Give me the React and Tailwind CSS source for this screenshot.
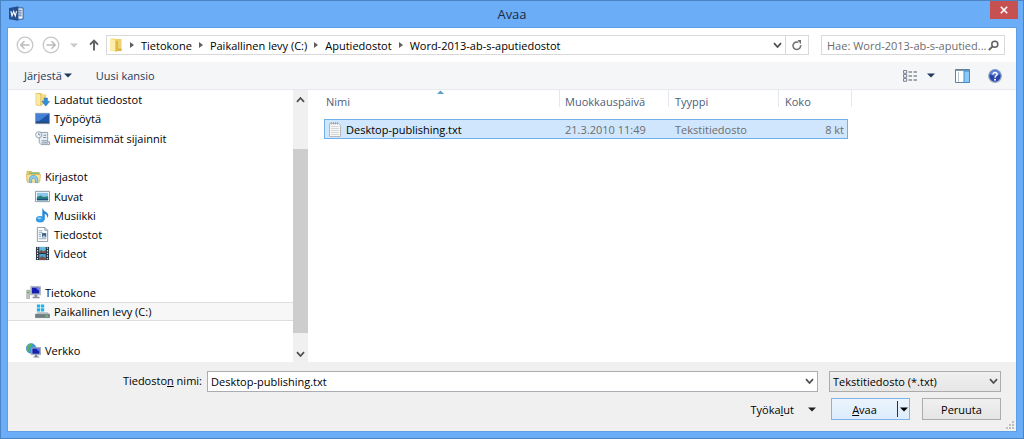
import React from "react";

const Svg = ({ children, className = "size-[15px]", box = "0 0 16 16" }) => (
  <svg viewBox={box} className={`${className} shrink-0`} fill="none" aria-hidden="true">
    {children}
  </svg>
);

const Chevron = ({ className = "" }) => (
  <Svg box="0 0 9 7" className={`h-[7px] w-[9px] ${className}`}>
    <path d="M1 1.2 4.5 5 8 1.2" stroke="#505050" strokeWidth="1.8" />
  </Svg>
);

const Caret = ({ color = "#1e395b" }) => (
  <Svg box="0 0 8 5" className="h-[5px] w-2">
    <path d="M0 .5h8L4 4.5z" fill={color} />
  </Svg>
);

const WordIcon = () => (
  <Svg>
    <path d="M9 2h6v12H9z" fill="#fff" stroke="#2b579a" />
    <path d="M10 4.5h3.5M10 6.5h3.5M10 8.5h3.5M10 10.5h3.5" stroke="#2b579a" />
    <path d="M0 2 10 .3v15.4L0 14z" fill="#244f91" />
    <path d="m2 5.5 1.2 5L5 5.8l1.7 4.7L8 5.5" stroke="#fff" strokeWidth="1.2" />
  </Svg>
);

const FolderIcon = () => (
  <Svg className="h-4 w-[14px]" box="0 0 14 16">
    <path d="M1.500 1.500h4l2 1.500V14h-6z" fill="#f3d774" />
    <path d="M6 2h6.500v12H6z" fill="#efd170" />
    <path d="m1.500 1.500 5 2V15l-5-1.500z" fill="#fbeea8" />
    <path d="M6.500 3.500V15l2.500-1.500V4z" fill="#e0b740" />
    <path d="M9 11.500h3.500V14H9z" fill="#dcb345" />
  </Svg>
);

const DownloadsIcon = () => (
  <Svg>
    <path d="M1 1h5l2 1.5V14H1z" fill="#e5bd4a" />
    <path d="M6 2.5h6V13H6z" fill="#f2d980" />
    <path d="m1 1 5 1.5V15l-5-1.5z" fill="#faeaa5" stroke="#d9b65a" strokeWidth=".5" />
    <path d="M9.8 6.5h3.4V10h2.3l-4 5-4-5h2.3z" fill="#2f8fe0" stroke="#1f68b0" strokeWidth=".6" />
  </Svg>
);

const DesktopIcon = () => (
  <Svg>
    <path d="M.5 2.5h15v11H.5z" fill="#1d56a8" stroke="#8f9fb3" />
    <path d="M1 3h14L4 11H1z" fill="#4380d6" />
    <path d="M1 11.5h14V13H1z" fill="#294876" />
  </Svg>
);

const RecentIcon = () => (
  <Svg>
    <path d="M4.5 1.5h9v10h2v3H6.5l-2-2z" fill="#e9eff4" stroke="#8e9dab" />
    <path d="M7 10.5h6M9 4.5h3M8.5 7h3.5M7 12.7h7" stroke="#72879a" />
    <circle cx="4" cy="4" r="3.3" fill="#f4f7fa" stroke="#8e9dab" />
    <path d="M4 2v2.2h1.8" stroke="#4c6d91" strokeWidth=".8" />
  </Svg>
);

const LibrariesIcon = () => (
  <Svg>
    <path d="M1 2.5h5L7 4h7.5v9H1z" fill="#efd06c" stroke="#c9a548" strokeWidth=".7" />
    <path d="M3 4.500h11" stroke="#72b878" strokeWidth="1.4" />
    <path d="M.5 6h15l-1 8H1.5z" fill="#f8e59b" stroke="#d5b55c" strokeWidth=".7" />
    <path d="M3.500 14.500v-3.200a4.500 4.500 0 0 1 9 0v3.200H10v-2.700a2 2 0 0 0-4 0v2.700z" fill="#8fcdec" stroke="#4a94c0" strokeWidth=".7" />
  </Svg>
);

const PicturesIcon = () => (
  <Svg>
    <path d="M.5 2.500h15v11H.5z" fill="#fff" stroke="#8795a3" />
    <path d="M2 4h12v8H2z" fill="#8bc7ea" />
    <path d="M2 8.500 6 7l3 1.500 5-.8V12H2z" fill="#2e7e7c" />
    <path d="M2 10.500h12V12H2z" fill="#194f86" />
  </Svg>
);

const MusicIcon = () => (
  <Svg>
    <path d="M8.500.5c.5 3.500 5.500 3.500 5.700 7.200 0 1.200-.5 2.200-1.200 3 .3-3-1.500-4.200-2.600-4.700v6.500H7.800V.5z" fill="#2a87d4" />
    <ellipse cx="5.500" cy="12" rx="4.500" ry="3.400" fill="#3299e3" />
    <ellipse cx="4.700" cy="11" rx="2.200" ry="1.200" fill="#91d0f7" />
  </Svg>
);

const DocumentsIcon = () => (
  <Svg>
    <path d="M2.500.5h8l3 3v12h-11z" fill="#fbfcfd" stroke="#8d99a5" />
    <path d="M10.500.5v3h3" stroke="#8d99a5" />
    <path d="M4 4h4M4 6h4M4 8h2.500M4 10h2.500M4 12.500h8" stroke="#8ca5bf" />
    <path d="M7.500 6.500h4.500v4.500H7.500z" fill="#385f8e" />
    <path d="m7.500 11 2-2.500L12 11z" fill="#a6c6de" />
  </Svg>
);

const VideosIcon = () => (
  <Svg>
    <path d="M1 1h14v14H1z" fill="#263443" />
    <path d="M4.500 1h7v6.500h-7z" fill="#61b9dc" />
    <path d="M4.500 8.500h7V15h-7z" fill="#4a9fd0" />
    <path d="M4.500 6 7 4l1.500 2 3-2v3.500h-7zM4.500 13l3-2 4 2v2h-7z" fill="#784c45" />
    <path d="M2.700 1.500v13M13.300 1.500v13" stroke="#dbe8ef" strokeWidth="1.300" strokeDasharray="1.500 1.300" />
  </Svg>
);

const ComputerIcon = () => (
  <Svg>
    <path d="M.8 5.500h3v9h-3z" fill="#c0cbc0" stroke="#84907f" strokeWidth=".6" />
    <path d="M1.500 8h1.600" stroke="#43a047" strokeWidth="1.400" />
    <path d="M5 1.500h10.500v9H5z" fill="#c9ced6" stroke="#8b919d" strokeWidth=".6" />
    <path d="M6.200 2.700h8.100v6.400H6.200z" fill="#161bb0" />
    <path d="M10 2.700h4.300v4z" fill="#6d84ee" />
    <path d="M9 10.500h3v2h2.500V14H7v-1.500h2z" fill="#8b919d" />
  </Svg>
);

const DriveIcon = () => (
  <Svg>
    <path d="M2 .5h3.400v3.300H2zM6.200.5h3.600v3.300H6.200zM2 4.600h3.400v3.300H2zM6.200 4.600h3.600v3.300H6.200z" fill="#1bb4e9" />
    <path d="m2 9.500 1-1h10.500L15.500 11H.5z" fill="#c2c9cd" />
    <path d="M.5 11h15v3.500H.5z" fill="#6d7d83" stroke="#56656b" strokeWidth=".6" />
    <path d="M11 12.700h3" stroke="#70e070" strokeWidth="1.200" />
  </Svg>
);

const NetworkIcon = () => (
  <Svg>
    <circle cx="5.500" cy="5.800" r="5.200" fill="#3b9bd8" stroke="#2a75aa" strokeWidth=".5" />
    <path d="M2 2.500c2-2 4-1.800 5-.8L5 4 3 5.500 4 8 2.500 9C.5 7 .5 4.500 2 2.500z" fill="#59b35a" />
    <path d="M5.700 4.800h9.800v7.700H5.700z" fill="#cdd6e4" stroke="#6e7b91" strokeWidth=".6" />
    <path d="M6.700 5.800h7.800v5.700H6.700z" fill="#1322ae" />
    <path d="M10.500 5.800h4v3.700z" fill="#607df0" />
    <path d="M9.500 12.500H12v2h2v1H8v-1h1.500z" fill="#788499" />
  </Svg>
);

const TextFileIcon = () => (
  <Svg className="h-[15px] w-[14px]" box="0 0 14 15">
    <path d="M1.500 1.500h9l2 2v11h-11z" fill="#f7f7f7" stroke="#b5b8bb" />
    <path d="M3 4.500h7.500M3 6.500h8M3 8.500h8M3 10.500h8M3 12.500h8" stroke="#d3d7da" />
    <path d="M3.500 0v2.500M5.500 0v2.500M7.500 0v2.500M9.500 0v2.500" stroke="#9ba1a6" strokeWidth=".8" />
  </Svg>
);

const tree = [
  { label: "Ladatut tiedostot", Icon: DownloadsIcon, child: true },
  { label: "Työpöytä", Icon: DesktopIcon, child: true },
  { label: "Viimeisimmät sijainnit", Icon: RecentIcon, child: true },
  null,
  { label: "Kirjastot", Icon: LibrariesIcon },
  { label: "Kuvat", Icon: PicturesIcon, child: true },
  { label: "Musiikki", Icon: MusicIcon, child: true },
  { label: "Tiedostot", Icon: DocumentsIcon, child: true },
  { label: "Videot", Icon: VideosIcon, child: true },
  null,
  { label: "Tietokone", Icon: ComputerIcon },
  { label: "Paikallinen levy (C:)", Icon: DriveIcon, child: true, selected: true },
  null,
  { label: "Verkko", Icon: NetworkIcon },
];

const crumbs = ["Tietokone", "Paikallinen levy (C:)", "Aputiedostot", "Word-2013-ab-s-aputiedostot"];

function TitleBar() {
  return (
    <header className="grid h-[26px] grid-cols-[1fr_auto_1fr] items-start">
      <div className="pt-[5px] pl-2">
        <WordIcon />
      </div>
      <h1 className="pt-1 text-[13px] leading-[18px] text-[#1b2b45]">Avaa</h1>
      <button aria-label="Sulje" className="mr-[5px] flex h-[18px] w-7 items-center justify-center justify-self-end bg-[#c75050]">
        <Svg box="0 0 8 8" className="size-2">
          <path d="m.8.8 6.400 6.400M7.200.8.8 7.200" stroke="#fff" strokeWidth="1.600" />
        </Svg>
      </button>
    </header>
  );
}

function NavButton({ label, forward }) {
  return (
    <button aria-label={label} className="shrink-0">
      <Svg box="0 0 18 18" className="size-[18px]">
        <circle cx="9" cy="9" r="7.800" stroke="#c8c8c8" strokeWidth="1.300" />
        {forward ? (
          <path d="M4.500 9h8.500M9.500 5.300 13.200 9l-3.700 3.700" stroke="#bcbcbc" strokeWidth="1.600" />
        ) : (
          <path d="M13.500 9H5M8.500 5.300 4.800 9l3.700 3.700" stroke="#bcbcbc" strokeWidth="1.600" />
        )}
      </Svg>
    </button>
  );
}

function AddressRow() {
  return (
    <div className="flex h-[34px] items-center bg-white pr-[11px] pl-2">
      <div className="flex gap-2">
        <NavButton label="Edellinen" />
        <NavButton label="Seuraava" forward />
      </div>
      <button aria-label="Viimeisimmät sijainnit" className="ml-[10px]">
        <Caret color="#c9c9c9" />
      </button>
      <button aria-label="Ylös" className="mr-[7px] ml-[11px]">
        <Svg box="0 0 10 12" className="h-3 w-[10px]">
          <path d="M5 11.500V2M1 5.700 5 1.700l4 4" stroke="#606060" strokeWidth="1.900" />
        </Svg>
      </button>
      <div className="flex h-5 min-w-0 flex-1 border border-[#d9d9d9]">
        <nav aria-label="Polku" className="flex min-w-0 flex-1 items-center pl-[2px]">
          <FolderIcon />
          {crumbs.map((c) => (
            <React.Fragment key={c}>
              <Svg box="0 0 4 6" className="mx-[7px] h-[6px] w-1">
                <path d="M0 0v6l4-3z" fill="#606060" />
              </Svg>
              <a href="#" className="whitespace-nowrap">{c}</a>
            </React.Fragment>
          ))}
        </nav>
        <button aria-label="Näytä polut" className="px-[3px]">
          <Chevron />
        </button>
        <button aria-label="Päivitä" className="flex w-[23px] items-center justify-center border-l border-[#d9d9d9]">
          <Svg box="0 0 10 11" className="h-[11px] w-[10px]">
            <path d="M8.600 5.200A3.800 3.800 0 1 1 6.500 2.300" stroke="#707070" strokeWidth="1.500" />
            <path d="M5.500 0H9v4.200z" fill="#707070" />
          </Svg>
        </button>
      </div>
      <label className="ml-3 flex h-5 w-[184px] items-center border border-[#d9d9d9] pr-[5px] pl-[5px]">
        <input
          type="text"
          aria-label="Hae"
          placeholder="Hae: Word-2013-ab-s-aputied..."
          className="min-w-0 flex-1 outline-none placeholder:text-[#6d6d6d]"
        />
        <Svg box="0 0 11 11" className="size-[11px]">
          <circle cx="6.800" cy="4.200" r="3" stroke="#606060" strokeWidth="1.500" />
          <path d="M4.600 6.400.8 10.200" stroke="#606060" strokeWidth="1.900" />
        </Svg>
      </label>
    </div>
  );
}

function Toolbar() {
  return (
    <div className="flex h-7 items-center border-b border-[#e6e9ed] bg-[#f5f6f7] pr-[14px] pl-4 text-[#1e395b]">
      <button className="flex items-center gap-[2px]">
        Järjestä
        <Caret />
      </button>
      <button className="ml-6">Uusi kansio</button>
      <button aria-label="Muuta näkymää" className="ml-auto">
        <Svg box="0 0 15 12" className="h-3 w-[15px]">
          {[0, 4, 8].map((y) => (
            <g key={y} transform={`translate(0 ${y})`}>
              <path d="M.5.500h3.200v2.800H.5z" fill="#eef1f6" stroke="#6d7788" strokeWidth=".9" />
              <path d="M5.500 2H9M10.500 2H14" stroke="#4f5967" strokeWidth="1.200" />
            </g>
          ))}
        </Svg>
      </button>
      <button aria-label="Lisää näkymiä" className="ml-[9px]">
        <Caret />
      </button>
      <button aria-label="Näytä esikatseluruutu" className="ml-5">
        <Svg box="0 0 15 14" className="h-[14px] w-[15px]">
          <path d="M.5.500h14v13H.5z" fill="#fff" stroke="#66809a" />
          <path d="M1 1.500h13" stroke="#7d99b6" />
          <path d="M9 2h5.500v11.500H9z" fill="#8cc8f5" stroke="#3c8fd0" />
          <path d="M3.500 3v10" stroke="#b9c3cd" />
        </Svg>
      </button>
      <button aria-label="Ohje" className="ml-[18px]">
        <Svg box="0 0 14 14" className="size-[14px]">
          <circle cx="7" cy="7" r="6.300" fill="#2645ad" stroke="#a2acc4" strokeWidth="1.200" />
          <path d="M2 5.500a5 5 0 0 1 10 0C9 7 5 7 2 5.500z" fill="#5e7fd6" />
          <path d="M4.900 5.600c0-3 4.400-2.700 4.200-.2C9 6.900 7 6.700 7 8.700" stroke="#fff" strokeWidth="1.500" />
          <circle cx="7" cy="10.700" r="1" fill="#fff" />
        </Svg>
      </button>
    </div>
  );
}

function Sidebar() {
  return (
    <nav aria-label="Sijainnit" className="flex w-[300px] shrink-0">
      <ul className="flex flex-1 flex-col pb-[2px]">
        {tree.map((item, i) => (
          <li key={i} className="flex min-h-[19px] flex-1">
            {item && (
              <a
                href="#"
                className={`flex flex-1 items-center gap-1 border-y ${item.child ? "pl-[27px]" : "pl-[18px]"} ${
                  item.selected ? "border-[#dedede] bg-[#f7f7f7]" : "border-transparent"
                }`}
              >
                <item.Icon />
                {item.label}
              </a>
            )}
          </li>
        ))}
      </ul>
      <div className="flex w-[15px] flex-col items-center bg-[#f0f0f0]">
        <Chevron className="mt-[6px] rotate-180" />
        <div className="mt-[46px] w-full flex-1 bg-[#cdcdcd]" />
        <Chevron className="mt-[18px] mb-1" />
      </div>
    </nav>
  );
}

function FileList() {
  const head = "h-[17px] border-r border-[#e3e8ee] pt-1 leading-4";
  const cell = "h-5 border-y border-[#70b0e8] p-0";
  return (
    <main className="min-w-0 flex-1 overflow-hidden pl-4">
      <table className="w-[528px] table-fixed border-separate border-spacing-0 text-left">
        <colgroup>
          <col className="w-[236px]" />
          <col className="w-[109px]" />
          <col className="w-[110px]" />
          <col className="w-[69px]" />
          <col className="w-1" />
        </colgroup>
        <thead className="text-[#4c607a]">
          <tr>
            <th className="relative h-[29px] p-0 align-top font-normal">
              <div className={`${head} pl-[2px]`}>Nimi</div>
              <Svg box="0 0 7 4" className="absolute top-0 left-[113px] h-1 w-[7px]">
                <path d="M0 4 3.500.500 7 4z" fill="#5aa0c8" />
              </Svg>
            </th>
            <th className="p-0 align-top font-normal"><div className={`${head} pl-[5px]`}>Muokkauspäivä</div></th>
            <th className="p-0 align-top font-normal"><div className={`${head} pl-[6px]`}>Tyyppi</div></th>
            <th colSpan={2} className="p-0 align-top font-normal"><div className={`${head} pl-[6px]`}>Koko</div></th>
          </tr>
        </thead>
        <tbody>
          <tr aria-selected="true" className="text-[#6d6d6d]">
            <td className={`${cell} border-l bg-[#cfe6fc]`}>
              <div className="flex items-center gap-1 pl-[3px] text-black">
                <TextFileIcon />
                Desktop-publishing.txt
              </div>
            </td>
            <td className={`${cell} bg-[#cfe6fc] pl-[5px]`}>21.3.2010 11:49</td>
            <td className={`${cell} bg-[#cfe6fc] pl-[6px]`}>Tekstitiedosto</td>
            <td className={`${cell} border-r bg-[#cfe6fc] pr-[3px] text-right`}>8 kt</td>
            <td />
          </tr>
        </tbody>
      </table>
    </main>
  );
}

function Footer() {
  return (
    <footer className="relative grid grid-cols-[195px_1fr_auto] gap-y-[6px] bg-[#f0f0f0] pt-[9px] pr-[15px] pb-[11px]">
      <label htmlFor="filename" className="pr-px text-right leading-5">
        Tiedosto<u>n</u> nimi:
      </label>
      <div className="ml-1 flex h-[21px] min-w-0 items-center border border-[#abadb3] bg-white pr-[3px] pl-[3px]">
        <input id="filename" defaultValue="Desktop-publishing.txt" className="min-w-0 flex-1 outline-none" />
        <button aria-label="Näytä tiedostonimet"><Chevron /></button>
      </div>
      <div className="ml-[11px] grid w-[172px] items-center">
        <select
          aria-label="Tiedostotyyppi"
          className="col-start-1 row-start-1 h-[21px] w-full appearance-none border border-[#acacac] bg-linear-to-b from-[#f0f0f0] to-[#e6e6e6] pl-[3px]"
        >
          <option>Tekstitiedosto (*.txt)</option>
        </select>
        <Chevron className="pointer-events-none col-start-1 row-start-1 mr-[3px] justify-self-end" />
      </div>
      <div className="col-span-3 flex h-[22px] justify-end">
        <button className="mr-[15px] flex items-center gap-[14px]">
          <span>Työka<u>l</u>ut</span>
          <Caret color="#202020" />
        </button>
        <div className="flex w-[79px] border border-[#7eb4ea] bg-linear-to-b from-[#ecf4fc] to-[#dcecfc]">
          <button className="flex-1"><u>A</u>vaa</button>
          <button aria-label="Avausvaihtoehdot" className="my-[2px] flex w-3 items-center justify-center border-l border-[#303030]">
            <Caret color="#000" />
          </button>
        </div>
        <button className="ml-3 w-[79px] border border-[#acacac] bg-linear-to-b from-[#f0f0f0] to-[#e5e5e5]">Peruuta</button>
      </div>
      <Svg box="0 0 8 8" className="absolute right-[2px] bottom-[2px] size-2">
        <path d="M6 0h2v2H6zM3 3h2v2H3zM6 3h2v2H6zM0 6h2v2H0zM3 6h2v2H3zM6 6h2v2H6z" fill="#bfbfbf" />
      </Svg>
    </footer>
  );
}

export default function App() {
  return (
    <div className="flex min-h-screen flex-col border border-[#4a84c4] bg-[#6badf6] font-['Open_Sans','Noto_Sans',sans-serif] text-[11px] leading-[17px] text-black">
      <TitleBar />
      <div className="mx-[6px] mb-[6px] flex flex-1 flex-col border border-[#5f9fe6] bg-white">
        <AddressRow />
        <Toolbar />
        <div className="flex flex-1">
          <Sidebar />
          <FileList />
        </div>
        <Footer />
      </div>
    </div>
  );
}
